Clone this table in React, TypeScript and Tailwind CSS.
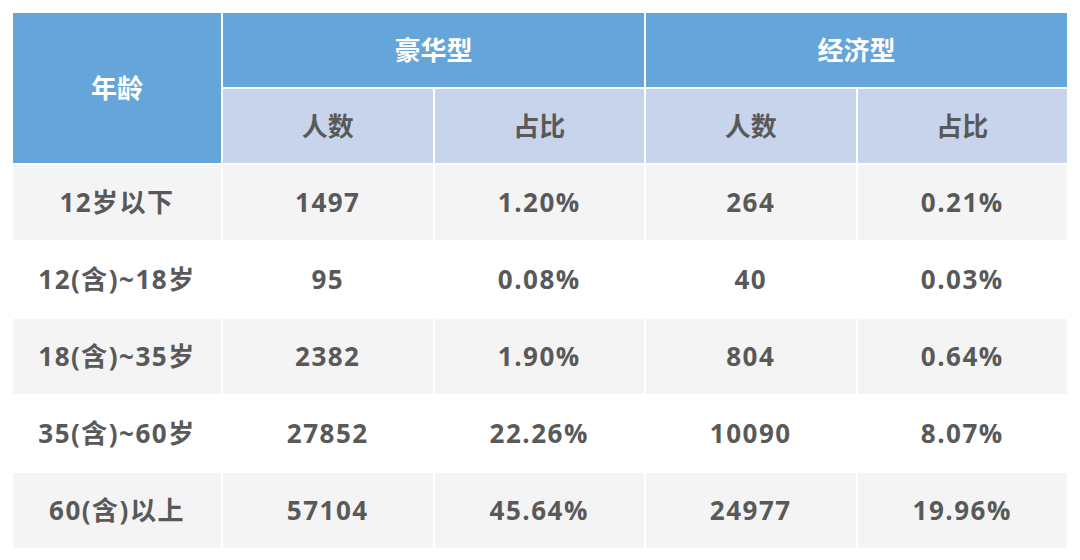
import React from "react";

const rows = [
  ["12岁以下", "1497", "1.20%", "264", "0.21%"],
  ["12(含)~18岁", "95", "0.08%", "40", "0.03%"],
  ["18(含)~35岁", "2382", "1.90%", "804", "0.64%"],
  ["35(含)~60岁", "27852", "22.26%", "10090", "8.07%"],
  ["60(含)以上", "57104", "45.64%", "24977", "19.96%"],
];

export default function App() {
  return (
    <div
      className="w-[1080px] h-[560px] bg-white pt-[13px] pl-[13px]"
      style={{ fontFamily: '"Open Sans", "Noto Sans CJK SC", sans-serif' }}
    >
      <div className="grid w-[1054px] grid-cols-[208px_repeat(4,1fr)] grid-rows-[74px_74px_repeat(5,75px)] gap-[2px] text-[26px] font-bold">
        <div className="row-span-2 bg-[#66a5d9] text-white flex items-center justify-center">年龄</div>
        <div className="col-span-2 bg-[#66a5d9] text-white flex items-center justify-center">豪华型</div>
        <div className="col-span-2 bg-[#66a5d9] text-white flex items-center justify-center">经济型</div>
        {["人数", "占比", "人数", "占比"].map((t, i) => (
          <div key={i} className="bg-[#c8d4ec] text-[#595959] flex items-center justify-center">{t}</div>
        ))}
        {rows.map((r, ri) =>
          r.map((c, ci) => (
            <div
              key={ri + "-" + ci}
              className={
                (ri % 2 === 0 ? "bg-[#f4f4f4] " : "bg-white ") +
                "text-[#595959] flex items-center justify-center tracking-[1.5px]"
              }
            >
              {c}
            </div>
          ))
        )}
      </div>
    </div>
  );
}
